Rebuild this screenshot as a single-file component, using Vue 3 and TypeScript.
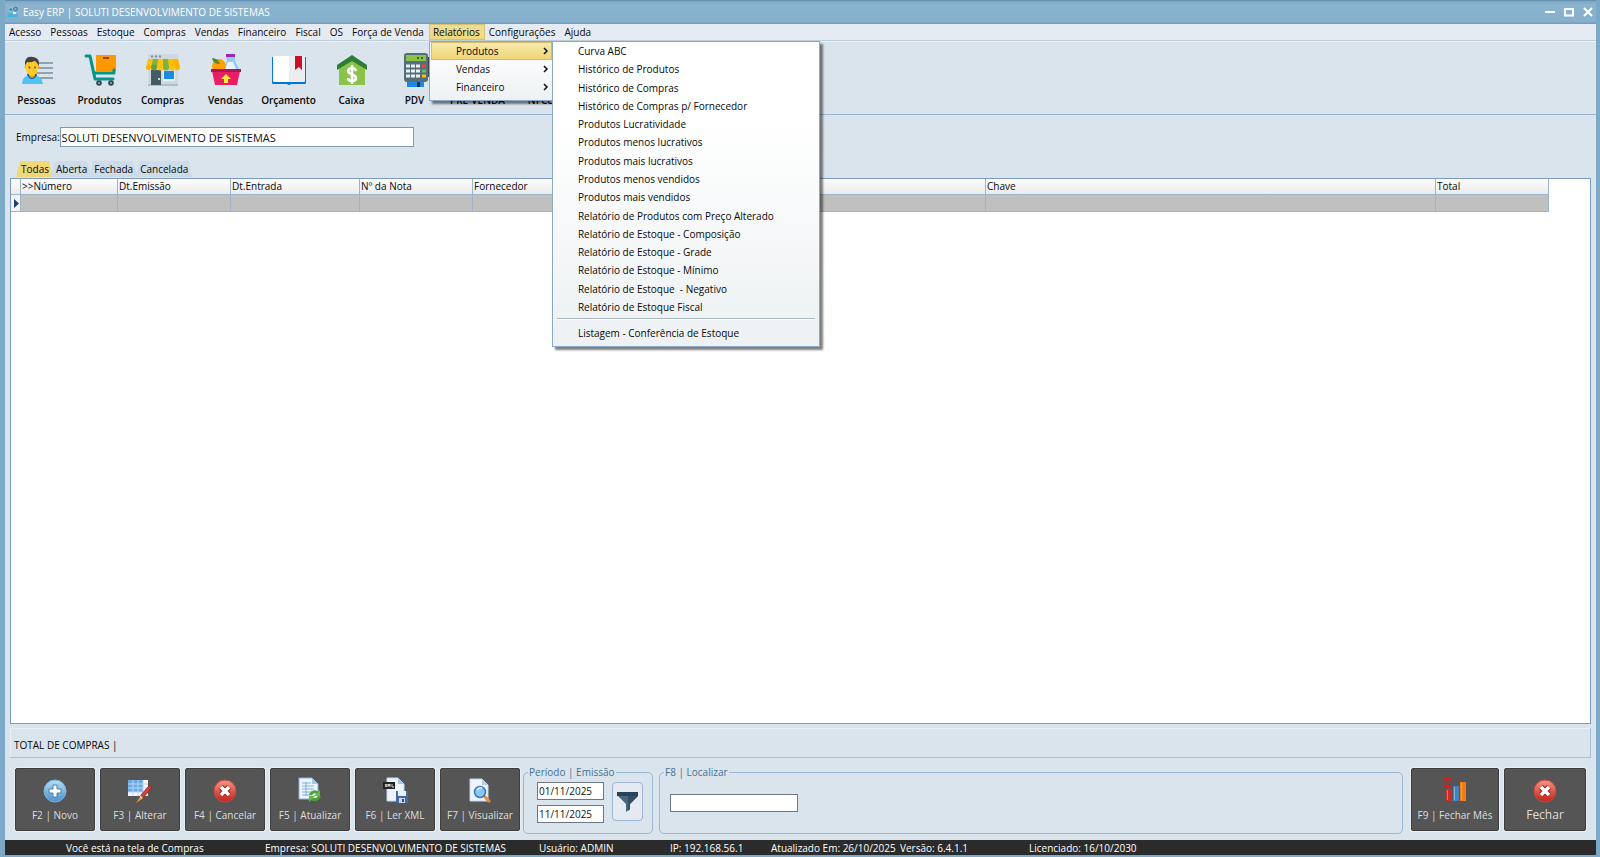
<script setup lang="ts">
import { ref } from 'vue'

const company = ref('SOLUTI DESENVOLVIMENTO DE SISTEMAS')
const dateFrom = ref('01/11/2025')
const dateTo = ref('11/11/2025')
const search = ref('')
const activeTab = ref('Todas')

const menus: string[] = ['Acesso', 'Pessoas', 'Estoque', 'Compras', 'Vendas', 'Financeiro', 'Fiscal', 'OS', 'Força de Venda', 'Relatórios', 'Configurações', 'Ajuda']
const reportGroups: string[] = ['Produtos', 'Vendas', 'Financeiro']
const productReports: string[] = [
  'Curva ABC', 'Histórico de Produtos', 'Histórico de Compras', 'Histórico de Compras p/ Fornecedor',
  'Produtos Lucratividade', 'Produtos menos lucrativos', 'Produtos mais lucrativos', 'Produtos menos vendidos',
  'Produtos mais vendidos', 'Relatório de Produtos com Preço Alterado', 'Relatório de Estoque - Composição',
  'Relatório de Estoque - Grade', 'Relatório de Estoque - Mínimo', 'Relatório de Estoque  - Negativo', 'Relatório de Estoque Fiscal',
]
const tools: string[] = ['Pessoas', 'Produtos', 'Compras', 'Vendas', 'Orçamento', 'Caixa', 'PDV', 'PRÉ-VENDA', 'NFCe']
const tabs: string[] = ['Todas', 'Aberta', 'Fechada', 'Cancelada']
const columns: string[] = ['>>Número', 'Dt.Emissão', 'Dt.Entrada', 'Nº da Nota', 'Fornecedor', 'Chave', 'Total']
const actions: string[] = ['F2 | Novo', 'F3 | Alterar', 'F4 | Cancelar', 'F5 | Atualizar', 'F6 | Ler XML', 'F7 | Visualizar']
const status: string[] = [
  'Você está na tela de Compras', 'Empresa: SOLUTI DESENVOLVIMENTO DE SISTEMAS', 'Usuário: ADMIN', 'IP: 192.168.56.1',
  'Atualizado Em: 26/10/2025', 'Versão: 6.4.1.1', 'Licenciado: 16/10/2030',
]
</script>

<template>
  <div class="window">
    <header class="titlebar">
      <svg class="logo" width="12" height="12" viewBox="0 0 12 12" aria-hidden="true">
        <path d="M2 1h5v5H2z" fill="#78c8dc" /><circle cx="8.500" cy="3" r="1.800" fill="none" stroke="#476b85" />
        <circle cx="4" cy="3.500" r="1.300" fill="#4b7d99" /><path d="M0 8l4-1 3 2 4-1v3H1z" fill="#3fb6dc" /><path d="M6 6h3v2H6z" fill="#d9edf5" />
      </svg>
      <h1>Easy ERP | SOLUTI DESENVOLVIMENTO DE SISTEMAS</h1>
      <div class="win-controls">
        <button type="button" aria-label="Minimizar"><svg width="12" height="12" viewBox="0 0 12 12"><path d="M1 6h10" stroke="#fff" stroke-width="2" /></svg></button>
        <button type="button" aria-label="Maximizar"><svg width="12" height="12" viewBox="0 0 12 12"><path d="M2 3h8v6.500H2z" fill="none" stroke="#fff" stroke-width="2" /></svg></button>
        <button type="button" aria-label="Fechar janela"><svg width="12" height="12" viewBox="0 0 12 12"><path d="M2 2l8 8M10 2l-8 8" stroke="#fff" stroke-width="2" /></svg></button>
      </div>
    </header>

    <nav class="menubar">
      <div v-for="m in menus" :key="m" class="menu">
        <button type="button" class="menu-btn" :class="{ open: m === 'Relatórios' }">{{ m }}</button>
        <div v-if="m === 'Relatórios'" class="dropdown">
          <button v-for="(g, i) in reportGroups" :key="g" type="button" class="group" :class="{ hot: i === 0 }">
            <span>{{ g }}</span>
            <svg width="6" height="8" viewBox="0 0 6 8"><path d="M1 1l3 3-3 3" fill="none" stroke="#111" stroke-width="1.500" /></svg>
          </button>
          <div class="submenu">
            <div class="reports">
              <button v-for="r in productReports" :key="r" type="button" class="report">{{ r }}</button>
            </div>
            <hr />
            <button type="button" class="report last">Listagem - Conferência de Estoque</button>
          </div>
        </div>
      </div>
    </nav>

    <div class="toolbar">
      <button v-for="t in tools" :key="t" type="button" class="tool">
        <svg v-if="t === 'Pessoas'" width="36" height="36" viewBox="0 0 36 36">
          <path d="M18 10h16M18 15h16M18 20h16M18 25h16" stroke="#90a4ae" stroke-width="2" />
          <path d="M3 31q0-8 8-9h4q8 1 9 9z" fill="#4fc3f7" /><path d="M8 22q5 8 10 0l-1-2H9z" fill="#01579b" /><path d="M10 18h6v5q-3 4-6 0z" fill="#ff9800" />
          <circle cx="7" cy="14" r="1.500" fill="#ffa726" /><circle cx="19" cy="14" r="1.500" fill="#ffa726" />
          <path d="M7 9h12v7q-1 6-6 7-5-1-6-7z" fill="#ffc928" /><path d="M6 13V9q1-6 8-5 6 1 6 6v3l-2-3-2-2q-5 2-8 1z" fill="#424242" />
          <circle cx="10.500" cy="14.500" r="1" fill="#784719" /><circle cx="16" cy="14.500" r="1" fill="#784719" />
        </svg>
        <svg v-else-if="t === 'Produtos'" width="36" height="36" viewBox="0 0 36 36">
          <path d="M14 2h20v16H14z" fill="#ff9800" /><path d="M21 4h6v2h-6z" fill="#8a4b00" />
          <path d="M4 3h4l5 23h18M12 20h20v-3" fill="none" stroke="#009688" stroke-width="3" stroke-linejoin="round" stroke-linecap="round" />
          <circle cx="17" cy="30" r="2.800" fill="#37474f" /><circle cx="29" cy="30" r="2.800" fill="#37474f" /><circle cx="17" cy="30" r="1" fill="#9aa8b0" /><circle cx="29" cy="30" r="1" fill="#9aa8b0" />
        </svg>
        <svg v-else-if="t === 'Compras'" width="36" height="36" viewBox="0 0 36 36">
          <path d="M3 1h30v32H3z" fill="#cfd8dc" /><path d="M3 31h30v2H3z" fill="#b0bec5" /><path d="M6 3.500h2M10 3.500h2M14 3.500h2" stroke="#78909c" stroke-width="2" />
          <path d="M6 17h10v15H6z" fill="#455a64" /><path d="M13 25h2v2h-2z" fill="#c8d2d7" /><path d="M18 18h12v10H18z" fill="#e3f2fd" /><path d="M19 18h10v8H19z" fill="#1e88e5" />
          <path d="M3 6h30l2 9H1z" fill="#ffc107" /><path d="M8 6h5l-1 9H6zM18 6h5l1 9h-6z" fill="#7cb342" /><path d="M28 6h5l2 9h-5z" fill="#ffb300" />
          <circle cx="3.500" cy="14.500" r="2.500" fill="#ffb300" /><circle cx="9" cy="14.500" r="3" fill="#689f38" /><circle cx="15" cy="14.500" r="3" fill="#ffc107" /><circle cx="21" cy="14.500" r="3" fill="#7cb342" /><circle cx="27" cy="14.500" r="3" fill="#ffc107" /><circle cx="32.500" cy="14.500" r="2.500" fill="#ffb300" />
        </svg>
        <svg v-else-if="t === 'Vendas'" width="36" height="36" viewBox="0 0 36 36">
          <path d="M18 3h9v5l4 8v3H15v-3l4-8z" fill="#90caf9" /><path d="M20 9h5l4 9H16z" fill="#e8f4fc" /><path d="M18 1h9v3h-9z" fill="#9c27b0" />
          <circle cx="11" cy="13" r="7" fill="#ffa000" /><path d="M4 5q6 0 8 6-7 0-8-6z" fill="#558b2f" />
          <path d="M4 18h28l-3 14H7z" fill="#e91e63" /><path d="M3 16h30v3H3z" fill="#ad1457" /><path d="M18 21l5 5h-3v4h-4v-4h-3z" fill="#ffeb3b" />
        </svg>
        <svg v-else-if="t === 'Orçamento'" width="36" height="36" viewBox="0 0 36 36">
          <path d="M1 4h34v26q0 1-1 1H20q-2 2-4 0H2q-1 0-1-1z" fill="#0277d5" /><path d="M2 3h16v26H3q-1 0-1-1z" fill="#fff" /><path d="M18 3h16v25q0 1-1 1H18z" fill="#ededef" /><path d="M24 3h7v14l-3-3-4 3z" fill="#c8102e" />
        </svg>
        <svg v-else-if="t === 'Caixa'" width="36" height="36" viewBox="0 0 36 36">
          <path d="M5 14L18 5l13 9v18H5z" fill="#8bc34a" /><path d="M18 2l15 10v5L18 8 3 17v-5z" fill="#2e7d32" />
          <path d="M22 18q-1-3-4-3t-4 3q0 2 4 3.500t4 3.500q0 3-4 3t-4-3M18 12v19" fill="none" stroke="#fff" stroke-width="2.500" />
        </svg>
        <svg v-else width="36" height="36" viewBox="0 0 36 36">
          <path d="M30 4h3v20h-3z" fill="#37474f" /><path d="M10 26h17v8H10z" fill="#1e88e5" /><path d="M20 26h3v8h-3z" fill="#0d3557" />
          <rect x="7" y="0" width="24" height="29" rx="3" fill="#546e7a" /><path d="M9 2h20v6H9z" fill="#8bc34a" /><path d="M20 5h2M24 5h2" stroke="#33691e" stroke-width="2" />
          <path d="M9 13h4M14 13h4M19 13h4M9 18h4M14 18h4M19 18h4M9 23h4M14 23h4M19 23h4" stroke="#eceff1" stroke-width="3" /><path d="M25 13h4" stroke="#f44336" stroke-width="3" /><path d="M25 18h4" stroke="#66bb6a" stroke-width="3" /><path d="M25 23h4" stroke="#ffc107" stroke-width="3" />
        </svg>
        <span>{{ t }}</span>
      </button>
    </div>

    <main class="content">
      <div class="company">
        <label for="company">Empresa:</label>
        <input id="company" v-model="company" type="text" />
      </div>

      <div class="tabs" role="tablist">
        <button v-for="t in tabs" :key="t" type="button" role="tab" class="tab" :class="{ active: t === activeTab }" :aria-selected="t === activeTab" @click="activeTab = t"><span>{{ t }}</span></button>
      </div>

      <div class="grid">
        <table>
          <colgroup>
            <col class="c-mark" /><col class="c-num" /><col class="c-date" /><col class="c-entry" /><col class="c-date" /><col class="c-supplier" /><col class="c-key" /><col class="c-date" />
          </colgroup>
          <thead>
            <tr><th></th><th v-for="c in columns" :key="c">{{ c }}</th></tr>
          </thead>
          <tbody>
            <tr>
              <td class="mark"><svg width="5" height="9" viewBox="0 0 5 9"><path d="M0 0l5 4.500L0 9z" fill="#1f3f78" /></svg></td>
              <td v-for="c in columns" :key="c"></td>
            </tr>
          </tbody>
        </table>
      </div>

      <div class="total">TOTAL DE COMPRAS |</div>

      <div class="bottom">
        <button v-for="(a, i) in actions" :key="a" type="button" class="action">
          <svg v-if="i === 0" width="24" height="24" viewBox="0 0 24 24">
            <defs><linearGradient id="blue" x2="0" y2="1"><stop stop-color="#b4def5" /><stop offset="1" stop-color="#4a90c8" /></linearGradient></defs>
            <circle cx="12" cy="12" r="11" fill="url(#blue)" stroke="#79b5dc" /><path d="M10 6h4v4h4v4h-4v4h-4v-4H6v-4h4z" fill="#fff" stroke="#4b80b3" />
          </svg>
          <svg v-else-if="i === 1" width="26" height="24" viewBox="0 0 26 24">
            <path d="M1 1h20v16H1z" fill="#f3f7fd" /><path d="M1 1h15v12H1z" fill="#68a9e2" /><path d="M1 5h20M1 9h20M1 13h20M6 1v16M11 1v16M16 1v16" stroke="#b9d7f2" />
            <path d="M22 7l3 1-9 11-3-2z" fill="#d34338" stroke="#9b2a23" /><path d="M13 16l3 3-3 2z" fill="#d8d8d8" /><path d="M13 18l2 2-6 4z" fill="#e99b24" />
          </svg>
          <svg v-else-if="i === 2" width="24" height="24" viewBox="0 0 24 24">
            <defs><linearGradient id="red" x2="0" y2="1"><stop stop-color="#f39787" /><stop offset="1" stop-color="#c42018" /></linearGradient></defs>
            <circle cx="12" cy="12" r="11" fill="url(#red)" stroke="#c8473d" /><path d="M8 8l8 8M16 8l-8 8" stroke="#9f211b" stroke-width="5.500" /><path d="M8 8l8 8M16 8l-8 8" stroke="#fff" stroke-width="3.500" />
          </svg>
          <svg v-else-if="i === 3" width="24" height="26" viewBox="0 0 24 26">
            <path d="M1 1h13l6 6v15H1z" fill="#edf5ff" stroke="#8bb1dc" /><path d="M14 1v6h6z" fill="#a8c6e8" /><path d="M4 6h9M4 9h12M4 12h12M4 15h12M4 18h8" stroke="#83add9" /><path d="M8 5v14" stroke="#83add9" />
            <path d="M12 18q4-6 9-1M22 19q-4 6-9 2" fill="none" stroke="#4da135" stroke-width="3" /><path d="M22 13v6h-6zM11 25v-6h6z" fill="#69b947" />
          </svg>
          <svg v-else-if="i === 4" width="26" height="26" viewBox="0 0 26 26">
            <path d="M5 1h11l6 6v17H5z" fill="#edf4ff" stroke="#c5d9f1" /><path d="M16 1v6h6z" fill="#aac2e2" /><path d="M1 5h12v7H1z" fill="#222" />
            <path d="M3 7l2 3M5 7l-2 3M6 10V7l1 2 1-2v3M10 7v3h2" fill="none" stroke="#fff" stroke-width="0.800" /><path d="M14 14h12v12H14z" fill="#476a99" /><path d="M16 14h8v5h-8z" fill="#e6f1ff" /><path d="M17 21h6v5h-6z" fill="#c4d6ef" /><path d="M20 22h2v3h-2z" fill="#304c78" />
          </svg>
          <svg v-else width="24" height="26" viewBox="0 0 24 26">
            <path d="M2 2h12l6 6v16H2z" fill="#eef4ff" stroke="#c3d6ee" /><path d="M14 2v6h6z" fill="#b6cbe8" /><path d="M16 19l5 5" stroke="#e58d35" stroke-width="3" stroke-linecap="round" />
            <circle cx="12" cy="15" r="5.500" fill="#89c8f1" stroke="#3c76b8" stroke-width="1.500" /><path d="M9 13q2-3 5-2" stroke="#e5f6ff" stroke-width="1.500" fill="none" />
          </svg>
          <span>{{ a }}</span>
        </button>

        <fieldset class="period">
          <legend>Período | Emissão</legend>
          <div class="dates">
            <input v-model="dateFrom" type="text" aria-label="Data inicial" />
            <input v-model="dateTo" type="text" aria-label="Data final" />
          </div>
          <button type="button" class="filter" aria-label="Filtrar">
            <svg width="22" height="22" viewBox="0 0 22 22"><path d="M1 5l8 8v8l4-3v-5l8-8z" fill="#49677f" /><path d="M11 5h10l-8 8v5l-2 2z" fill="#344f65" /><path d="M0 1h21v4H0z" fill="#2b435a" /></svg>
          </button>
        </fieldset>

        <fieldset class="locate">
          <legend>F8 | Localizar</legend>
          <input v-model="search" type="text" aria-label="Localizar" />
        </fieldset>

        <button type="button" class="action month">
          <svg width="24" height="26" viewBox="0 0 24 26">
            <path d="M3 12h6v12H3z" fill="#c72e27" /><path d="M10 9h6v15h-6z" fill="#3f83c7" /><path d="M17 5h6v19h-6z" fill="#f47b12" /><path d="M4.500 13v10M11.500 10v13M18.500 6v17" stroke="#fff" stroke-opacity="0.350" />
            <path d="M1 1h7v2.500H7L6 2.500H4L6 5.500 3.500 9H7l1-1.500h.5V10H1V9l3-3.500L1 2z" fill="#d01f1f" />
          </svg>
          <span>F9 | Fechar Mês</span>
        </button>
        <button type="button" class="action close">
          <svg width="24" height="24" viewBox="0 0 24 24"><circle cx="12" cy="12" r="11" fill="url(#red)" stroke="#c8473d" /><path d="M8 8l8 8M16 8l-8 8" stroke="#9f211b" stroke-width="5.500" /><path d="M8 8l8 8M16 8l-8 8" stroke="#fff" stroke-width="3.500" /></svg>
          <span>Fechar</span>
        </button>
      </div>
    </main>

    <footer class="statusbar"><span v-for="s in status" :key="s">{{ s }}</span></footer>
  </div>
</template>

<style>
body { margin: 0; }
</style>

<style scoped>
* { box-sizing: border-box; }
.window { min-height: 100vh; display: flex; flex-direction: column; background: #dae4ed; border: solid #7ba9c7; border-width: 0 4px 2px 5px; font: 10px/14px "Open Sans", "Noto Sans", sans-serif; color: #080808; }
button { font: inherit; color: inherit; border: 0; padding: 0; margin: 0; background: none; white-space: pre; }
input { font: inherit; color: #111; border: 1px solid #6b7785; background: #fff; padding: 0 2px; min-width: 0; }
svg { display: block; flex: none; }

.titlebar { height: 24px; display: flex; align-items: center; gap: 4px; padding: 0 2px 2px 2px; background: linear-gradient(#7ba6c4, #8ab4d0 15%, #86afcc 90%, #6b9bbd); border-top: 1px solid #6992b2; }
.titlebar h1 { margin: 0; font-size: 10px; font-weight: 400; color: #fff; flex: 1; }
.win-controls { display: flex; gap: 7px; }

.menubar { height: 17px; display: flex; background: #e6ebf3; border-bottom: 1px solid #bccddb; }
.menu { position: relative; }
.menu-btn { height: 16px; padding: 0 5px 0 4px; display: block; line-height: 14px; }
.menu-btn.open { background: linear-gradient(#eadca0, #f2da78); box-shadow: inset 0 0 0 1px #d9c36f; }
.dropdown { position: absolute; z-index: 5; left: 0; top: 17px; width: 124px; padding: 0 0 4px 1px; background: linear-gradient(#fff, #eef2f4); border: 1px solid #8ba8c9; box-shadow: 3px 3px 2px rgba(0, 0, 0, 0.5); }
.group { display: flex; align-items: center; justify-content: space-between; width: 100%; height: 18px; padding: 0 3px 0 25px; }
.group.hot { background: linear-gradient(#f7e9b0, #f0d572); box-shadow: inset 0 0 0 1px #d5bd68; }
.submenu { position: absolute; left: 122px; top: -1px; width: 268px; padding-bottom: 4px; background: linear-gradient(#fff 25%, #edf1f3); border: 1px solid #8ba8c9; box-shadow: 3px 3px 2px rgba(0, 0, 0, 0.5); }
.reports { display: grid; grid-auto-rows: 1fr; height: 274px; }
.report { display: block; width: 100%; padding-left: 25px; text-align: left; }
.submenu hr { margin: 2px 4px 4px; border: 0; border-top: 1px solid #a9b9c1; border-bottom: 1px solid #fff; }
.report.last { height: 18px; }

.toolbar { height: 74px; display: flex; border-top: 1px solid #eef3f7; border-bottom: 1px solid #9ab8d1; }
.tool { width: 63px; display: flex; flex-direction: column; align-items: center; padding-top: 11px; gap: 4px; font-weight: 600; }

.content { flex: 1; display: flex; flex-direction: column; padding: 0 5px; }
.company { display: flex; align-items: center; padding: 12px 0 0 6px; }
.company input { width: 354px; height: 20px; border-color: #7d9bb8; font-weight: 500; font-size: 11px; padding: 0 1px; }
.tabs { display: flex; padding: 14px 0 0 7px; }
.tab { position: relative; height: 16px; padding: 0 3px 0 4px; line-height: 14px; z-index: 0; }
.tab::before { content: ""; position: absolute; inset: 0 -1px; z-index: -1; background: #cddce8; clip-path: polygon(4px 0, calc(100% - 4px) 0, 100% 100%, 0 100%); }
.tab.active::before { background: #f0d878; }

.grid { flex: 1; margin-top: 1px; background: #fff; border: 1px solid #7d9bc0; overflow: hidden; }
table { border-collapse: separate; border-spacing: 0; table-layout: fixed; width: 1537px; }
.c-mark { width: 10px; } .c-num { width: 97px; } .c-date { width: 113px; } .c-entry { width: 129px; } .c-supplier { width: 513px; } .c-key { width: 450px; } 
th { height: 16px; padding: 0 0 2px 1px; text-align: left; font-weight: 400; line-height: 12px; background: linear-gradient(#fdfdfd, #ebebeb); border: solid #9bb5cc; border-width: 0 1px 1px 0; white-space: nowrap; }
td { height: 17px; padding: 0; background: #c0c0c0; border: solid #9bb5cc; border-width: 0 1px 1px 0; }
td.mark { background: #f3f3f3; padding-left: 3px; }

.total { height: 30px; margin-top: 4px; padding: 10px 4px 0; border: solid #a7c0d8; border-width: 0 1px 1px 0; box-shadow: inset 1px 1px #e8eff5; }
.bottom { display: flex; align-items: flex-start; gap: 5px; padding: 10px 5px 6px; }
.action { width: 80px; height: 63px; border: 1px solid #3e3e3e; border-radius: 2px; background: #555; color: #dedede; display: flex; flex-direction: column; align-items: center; justify-content: flex-end; gap: 5px; padding-bottom: 8px; box-shadow: 0 0 0 1px #e9f0f5; }
.month { width: 88px; margin-left: 3px; }
.close { width: 82px; font-size: 12px; }
fieldset { min-width: 0; margin: 0; height: 68px; border: 1px solid #9cb6d1; border-radius: 5px; align-self: flex-start; margin-top: -2px; color: #44708f; }
legend { padding: 0 1px; line-height: 12px; }
.period { width: 130px; margin-left: -2px; padding: 4px 0 0 13px; display: flex; gap: 8px; }
.period legend { margin-left: -9px; }
.dates { display: flex; flex-direction: column; gap: 5px; width: 67px; }
.dates input { height: 18px; width: 67px; padding: 0 1px; }
.filter { width: 31px; height: 39px; display: grid; place-items: center; border: 1px solid #9eb5d3; border-radius: 4px; background: #e5eaf2; }
.locate { flex: 1; padding: 16px 0 0 10px; margin-left: 1px; }
.locate legend { margin-left: -6px; }
.locate input { width: 128px; height: 18px; display: block; }

.statusbar { height: 15px; padding-left: 61px; display: grid; grid-template-columns: 199px 274px 131px 101px 129px 129px 1fr; background: #2b2b2b; color: #fff; font-weight: 500; line-height: 16px; white-space: nowrap; }
</style>
